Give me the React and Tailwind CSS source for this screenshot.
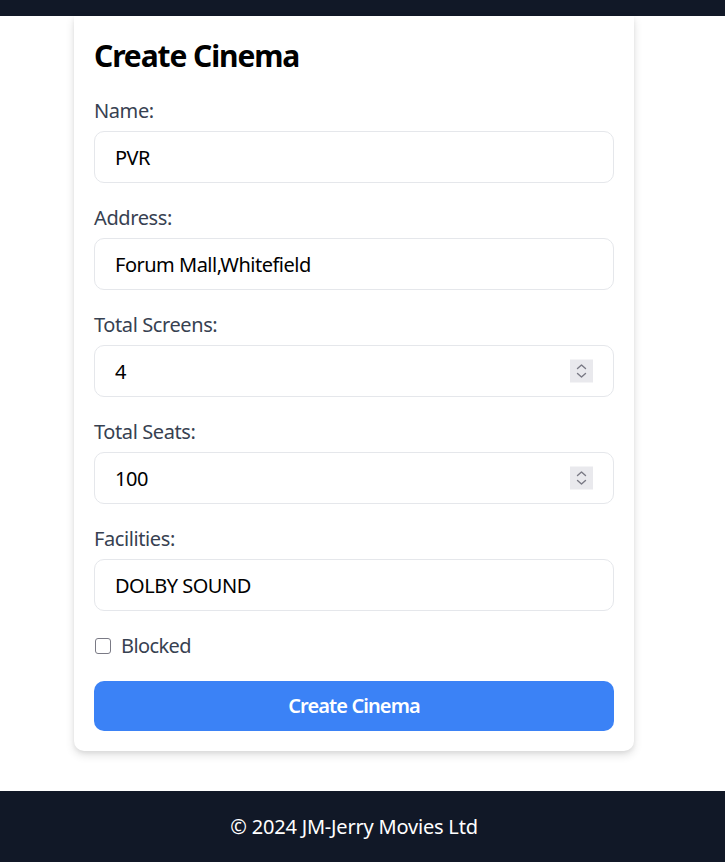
import React from 'react';

const font = { fontFamily: '"Noto Sans", "Open Sans", sans-serif' };

// Native-looking number spinner drawn over the input
const Spinner = () => (
  <div className="absolute right-[21px] top-1/2 -translate-y-1/2 w-[23px] h-[23px] bg-[#e9e9ed] flex items-center justify-center">
    <svg width="13" height="17" viewBox="0 0 13 17" fill="none" stroke="#7a7a85" strokeWidth="1.4" strokeLinecap="round" strokeLinejoin="round">
      <path d="M2.5 6 L6.5 2.5 L10.5 6" />
      <path d="M2.5 11 L6.5 14.5 L10.5 11" />
    </svg>
  </div>
);

const Field = ({ label, value, number }) => (
  <div className="mb-[21px]">
    <label className="block text-[20px] leading-[28px] tracking-[-0.4px] text-[#374151] mb-[6px]">{label}</label>
    <div className="relative">
      <input
        type="text"
        defaultValue={value}
        className="w-full h-[52px] px-[20px] border border-[#e5e7eb] rounded-[10px] text-[20px] tracking-[-0.5px] text-black outline-none bg-white"
      />
      {number && <Spinner />}
    </div>
  </div>
);

export default function App() {
  return (
    <div className="min-h-screen bg-white flex flex-col" style={font}>
      {/* Top nav strip */}
      <div className="h-4 bg-[#111827]" />

      <main className="flex justify-center pr-[17px] pb-10">
        <div className="w-[560px] bg-white rounded-b-[10px] shadow-[0_4px_10px_rgba(0,0,0,0.12),0_2px_4px_rgba(0,0,0,0.06)] p-5">
          <h1 className="text-[30px] leading-[40px] font-bold tracking-[-1.1px] text-black mb-[21px]">Create Cinema</h1>

          <Field label="Name:" value="PVR" />
          <Field label="Address:" value="Forum Mall,Whitefield" />
          <Field label="Total Screens:" value="4" number />
          <Field label="Total Seats:" value="100" number />
          <Field label="Facilities:" value="DOLBY SOUND" />

          <label className="flex items-center h-[28px] mb-[21px]">
            <input
              type="checkbox"
              className="appearance-none w-4 h-4 ml-px border-[1.5px] border-[#7a7a85] rounded-[3px] bg-white"
            />
            <span className="ml-[10px] text-[20px] leading-[28px] tracking-[-0.6px] text-[#374151]">Blocked</span>
          </label>

          <button className="w-full h-[50px] bg-[#3b82f6] text-white text-[20px] font-semibold tracking-[-0.9px] rounded-[10px]">
            Create Cinema
          </button>
        </div>
      </main>

      <footer className="h-[71px] bg-[#111827] flex items-center justify-center pr-[17px]">
        <p className="text-[20px] tracking-[-0.2px] text-white">© 2024 JM-Jerry Movies Ltd</p>
      </footer>
    </div>
  );
}
